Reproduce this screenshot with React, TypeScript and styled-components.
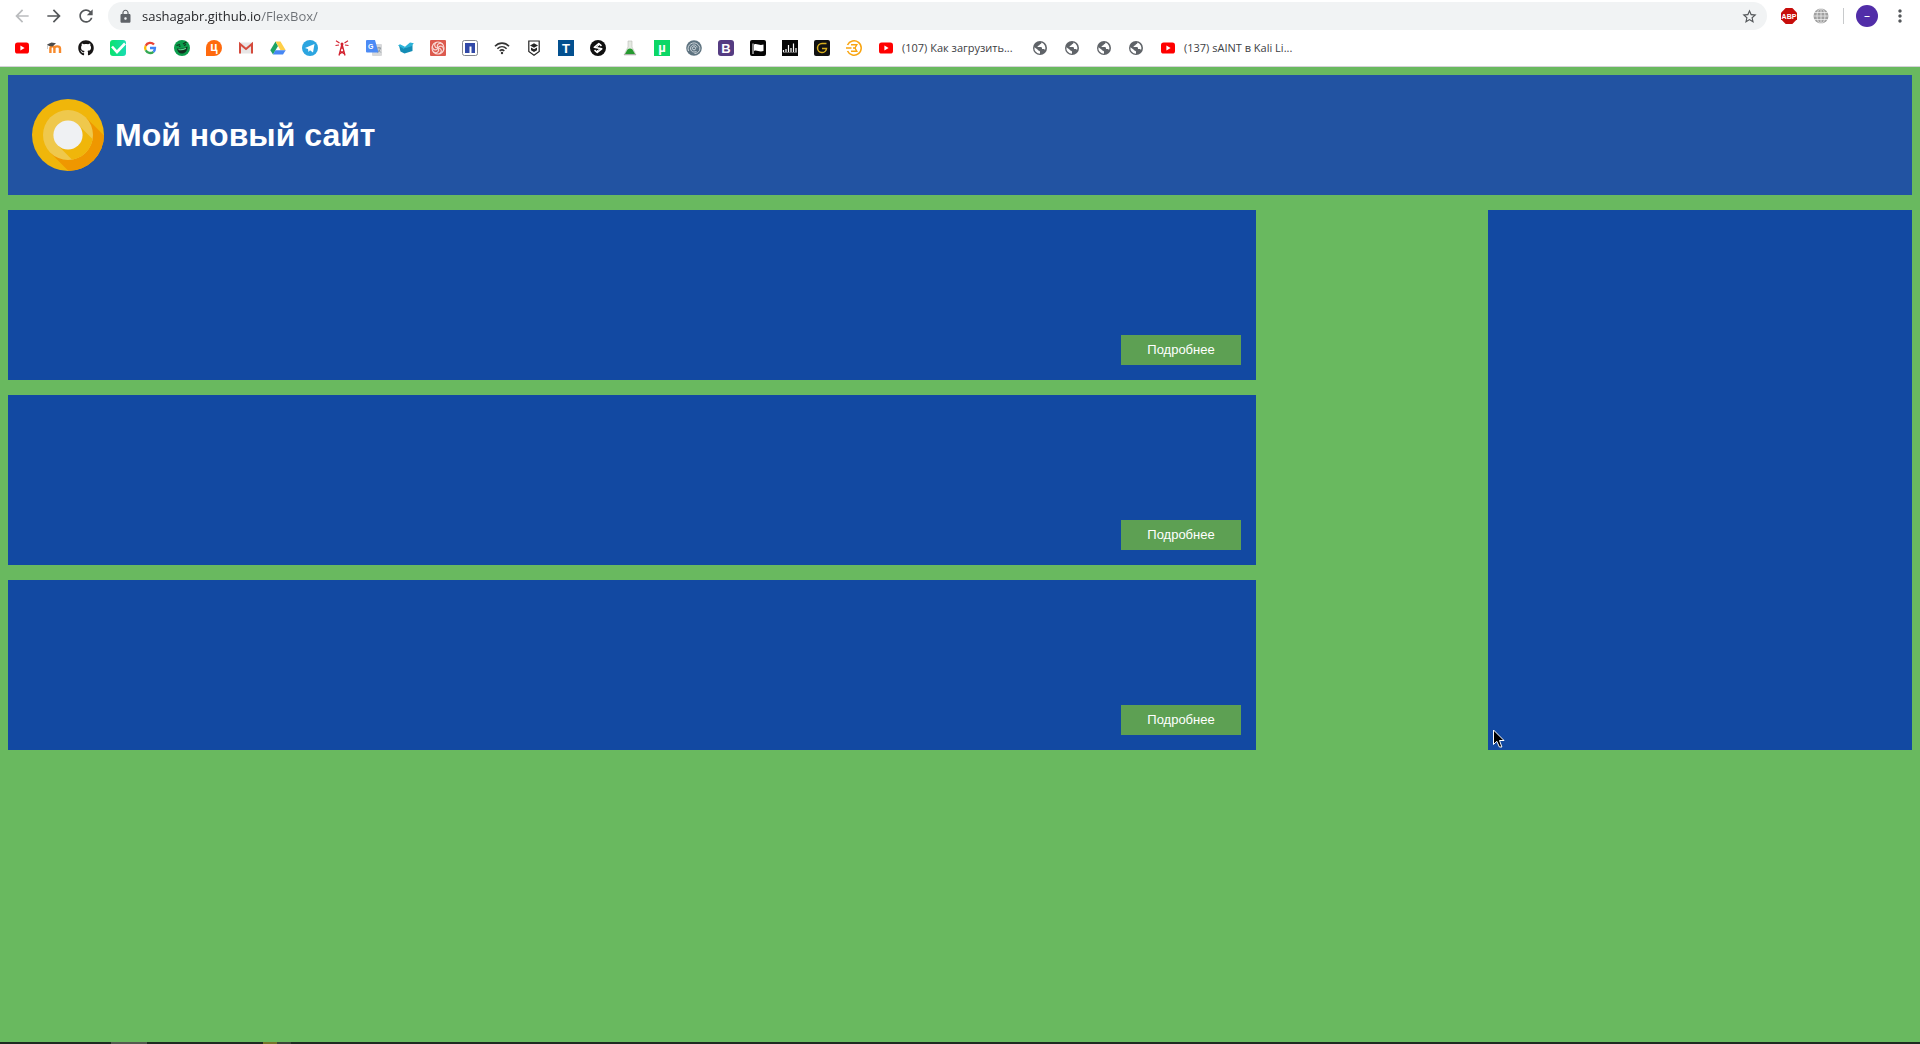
import React from "react";
import styled, { createGlobalStyle } from "styled-components";
import { FaGithub } from "react-icons/fa";
import { MdArrowBack, MdArrowForward, MdRefresh, MdLock, MdStarBorder, MdMoreVert } from "react-icons/md";

const GlobalStyle = createGlobalStyle`
  *, *::before, *::after { box-sizing: border-box; }
  body { margin: 0; background: #69b95f; font-family: "Liberation Sans", Arial, sans-serif; }
`;

const uiFont = `"Open Sans", "Noto Sans", sans-serif`;

const Window = styled.div`
  min-height: 100vh;
  display: flex;
  flex-direction: column;
`;

/* Browser chrome */

const Chrome = styled.header`
  background: #fff;
  border-bottom: 1px solid #d4d3d8;
  font-family: ${uiFont};
`;

const Toolbar = styled.div`
  height: 32px;
  display: flex;
  align-items: center;
  padding: 0 10px 0 12px;
  gap: 12px;
`;

const ToolButton = styled.button<{ $dim?: boolean }>`
  width: 20px;
  height: 20px;
  padding: 0;
  border: 0;
  background: none;
  display: flex;
  align-items: center;
  justify-content: center;
  color: ${(p) => (p.$dim ? "#babcbe" : "#54575a")};
`;

const Omnibox = styled.label`
  flex: 1;
  height: 28px;
  display: flex;
  align-items: center;
  gap: 9px;
  padding: 0 8px 0 10px;
  border-radius: 14px;
  background: #f1f3f4;
  color: #5f6368;
`;

const Address = styled.input`
  flex: 1;
  min-width: 0;
  height: 24px;
  padding: 0;
  border: 0;
  outline: 0;
  font: 13px/20px ${uiFont};
  color: #202124;
  background: linear-gradient(90deg, #202124 118px, #6b6f74 118px);
  background-clip: text;
  -webkit-background-clip: text;
  -webkit-text-fill-color: transparent;
`;

const Extensions = styled.div`
  display: flex;
  align-items: center;
  gap: 12px;
`;

const Divider = styled.span`
  width: 1px;
  height: 16px;
  background: #c8cacc;
`;

const Avatar = styled.button`
  width: 22px;
  height: 22px;
  padding: 0;
  border: 0;
  border-radius: 50%;
  background: #512da8;
  color: #fff;
  font: 12px/20px ${uiFont};
`;

const Bookmarks = styled.nav`
  height: 34px;
  display: flex;
  align-items: center;
  gap: 16px;
  padding: 0 14px 2px;
  overflow: hidden;
`;

const Bookmark = styled.a`
  flex: none;
  display: flex;
  align-items: center;
  gap: 8px;
  color: #3c4043;
  font-size: 11px;
  line-height: 16px;
  text-decoration: none;
  white-space: nowrap;
`;

const BookmarkLabel = styled.span`
  min-width: 114px;
`;

/* Page */

const Page = styled.main`
  flex: 1;
  display: flex;
  flex-direction: column;
  gap: 15px;
  padding: 8px;
`;

const Banner = styled.div`
  height: 120px;
  display: flex;
  align-items: center;
  gap: 11px;
  padding: 0 24px;
  background: #2253a2;
`;

const Title = styled.h1`
  margin: 0;
  color: #fff;
  font-size: 32px;
  line-height: 38px;
`;

const Columns = styled.div`
  display: flex;
  justify-content: space-between;
`;

const Cards = styled.section`
  width: 65vw;
  display: flex;
  flex-direction: column;
  gap: 15px;
`;

const Card = styled.article`
  height: 170px;
  display: flex;
  align-items: flex-end;
  justify-content: flex-end;
  padding: 15px;
  background: #1249a2;
`;

const MoreButton = styled.button`
  width: 120px;
  height: 30px;
  padding: 0;
  border: 0;
  background: #5da053;
  color: #fff;
  font: 13px/16px "Liberation Sans", Arial, sans-serif;
`;

const Sidebar = styled.aside`
  position: relative;
  width: calc(20vw + 40px);
  background: #1249a2;
`;

const Pointer = styled.svg`
  position: absolute;
  left: 5px;
  bottom: 2px;
`;

const Taskbar = styled.footer`
  height: 2px;
  display: flex;
  padding-left: 111px;
  background: #1d2a20;
`;

const Task = styled.span<{ $width: number; $color: string }>`
  width: ${(p) => p.$width}px;
  margin-right: ${(p) => (p.$width > 20 ? 116 : 0)}px;
  background: ${(p) => p.$color};
`;

/* Icons */

const Glyph = ({ children }: { children: React.ReactNode }) => (
  <svg width="16" height="16" viewBox="0 0 16 16" aria-hidden="true">{children}</svg>
);

type LetterProps = { text: string; fill?: string; size?: number; y?: number; weight?: number };
const Letter = ({ text, fill = "#fff", size = 12, y = 12, weight = 700 }: LetterProps) => (
  <text x="8" y={y} textAnchor="middle" fontFamily="Liberation Sans, sans-serif" fontSize={size} fontWeight={weight} fill={fill}>{text}</text>
);

const YouTube = () => (
  <Glyph>
    <rect x="1" y="2.6" width="14" height="11" rx="2.6" fill="#f00" />
    <path d="M6.4 5.6v5L10.6 8z" fill="#fff" />
  </Glyph>
);
const Moodle = () => (
  <Glyph>
    <path d="M4.4 13V8.6c0-3 4-3 4 0V13M8.4 8.6c0-3 5.600-3 5.600 0V13" fill="none" stroke="#f7892b" strokeWidth="2.400" />
    <path d="M1 4.600 5.500 2.500 10 3.200 6.500 6.600 3 6z" fill="#4b4b4b" />
    <path d="M1.500 5v4" stroke="#a9a9a9" strokeWidth=".6" />
  </Glyph>
);
const Check = () => (
  <Glyph>
    <defs><linearGradient id="chk" x2="1" y2="0"><stop stopColor="#0be36c" /><stop offset="1" stopColor="#1bdcb4" /></linearGradient></defs>
    <rect width="16" height="16" rx="3" fill="url(#chk)" />
    <path d="M2 6.500 7 12 15 3.500" fill="none" stroke="#fff" strokeWidth="2.600" />
  </Glyph>
);
const Google = () => (
  <Glyph>
    <g fill="none" strokeWidth="2.300">
      <path d="M12 4.600A5 5 0 0 0 3.700 5.700" stroke="#ea4335" />
      <path d="M3.700 5.700a5 5 0 0 0 0 4.600" stroke="#fbbc05" />
      <path d="M3.700 10.300A5 5 0 0 0 11.400 11.800" stroke="#34a853" />
      <path d="M11.400 11.800A5 5 0 0 0 13 8H8" stroke="#4285f4" />
    </g>
  </Glyph>
);
const Laugh = () => (
  <Glyph>
    <circle cx="8" cy="8" r="8" fill="#0b9d4c" />
    <path d="M3 8.500c3 .8 7 .3 10.500-2C13.500 11 11 13.500 8 13.500S3.500 11.500 3 8.500z" fill="#12301f" />
    <path d="M4.500 9.500c2.500.6 5 .2 7.500-1.200" stroke="#5fd68f" strokeWidth="1.200" fill="none" />
    <path d="M2.500 5.500 6 4.500M9 4l3.500-2M5 6.500l1.500-.5M10 5.500l2-1" stroke="#12301f" strokeWidth="1.300" />
  </Glyph>
);
const Cyan = () => (
  <Glyph>
    <path d="M8 0a8 8 0 1 1 0 16H0V8a8 8 0 0 1 8-8z" fill="#ff6a0e" />
    <Letter text="ц" size={12} y={11} />
  </Glyph>
);
const Gmail = () => (
  <Glyph>
    <rect x="1" y="2.500" width="14" height="11" rx="1" fill="#e8e6e6" />
    <path d="M2 13.500V4l6 5 6-5v9.500" fill="none" stroke="#d54b3d" strokeWidth="2" />
  </Glyph>
);
const Drive = () => (
  <Glyph>
    <path d="M5.500 1.500 8 6 3 14.500.300 10.200z" fill="#1da362" />
    <path d="M5.500 1.500h5l5.200 8.700h-5.200z" fill="#ffcf48" />
    <path d="M5.400 10.200h10.300L13 14.500H3z" fill="#4687f4" />
  </Glyph>
);
const Telegram = () => (
  <Glyph>
    <circle cx="8" cy="8" r="8" fill="#2ca5e0" />
    <path d="M3 8 12.500 4 11 12.500 8 10.300 6.500 12 6 9z" fill="#fff" />
  </Glyph>
);
const Tower = () => (
  <Glyph>
    <g stroke="#d2202e" fill="none">
      <path d="M8 4 5 15.500M8 4l3 11.500M6.500 8h3M6 11l4.500 3M10 11l-4.500 3" strokeWidth="1.300" />
      <path d="M5.500 3 2 .8M5 5 1.500 5.500M10.500 3 14 .8M11 5l3.500.5" strokeWidth="1.100" />
    </g>
    <circle cx="8" cy="4" r="1.500" fill="#d2202e" />
  </Glyph>
);
const Translate = () => (
  <Glyph>
    <rect x="6" y="4" width="10" height="12" rx="1" fill="#d7d8da" />
    <path d="M1 0h8l3.500 12.500H1a1 1 0 0 1-1-1V1a1 1 0 0 1 1-1z" fill="#4c8bf5" />
    <text x="2" y="9" fontFamily="Liberation Sans, sans-serif" fontWeight="700" fontSize="7" fill="#fff">G</text>
    <path d="M11 8h4M13 7v1M14.300 8c-.3 2-1.300 3.500-2.800 4.600M12 9.500l2.800 3" fill="none" stroke="#7d8b92" strokeWidth=".8" />
  </Glyph>
);
const Book = () => (
  <Glyph>
    <path d="M1 5.500 6.500 7.500 14.500 5v6L6.500 13.500 2.500 11.500z" fill="#138cb5" />
    <path d="M0 5.500 2 4.200 7 6.800 6 9zM7 6.800 12 2.500 15.800 3.200 13.500 6.200 8 8z" fill="#2bb2d8" />
  </Glyph>
);
const Knot = () => (
  <Glyph>
    <rect width="16" height="16" rx="1" fill="#dc5a4e" />
    <g fill="none" stroke="#f9d9d5" strokeWidth="1.100">
      {[0, 60, 120, 180, 240, 300].map((a) => <path key={a} d="M8 8C6 5 9 2 12.500 4" transform={`rotate(${a} 8 8)`} />)}
      <circle cx="8" cy="8" r="6" />
    </g>
  </Glyph>
);
const Netacad = () => (
  <Glyph>
    <rect x=".5" y=".5" width="15" height="15" rx="2" fill="#fff" stroke="#85878e" />
    <path d="M3 3h10v10H9.500V6.500h-2V13H3z" fill="#3149a8" />
  </Glyph>
);
const Wifi = () => (
  <Glyph>
    <g fill="none" stroke="#343434" strokeWidth="1.600">
      <path d="M1 6.300c4-4.200 10-4.200 14 0M3.400 8.800c2.700-2.700 6.500-2.700 9.200 0M5.700 11c1.400-1.300 3.200-1.300 4.600 0" />
    </g>
    <circle cx="8" cy="13" r="1.200" fill="#343434" />
  </Glyph>
);
const Shield = () => (
  <Glyph>
    <path d="M2.800 1h10.400v10.500L8 15.200 2.800 11.500z" fill="#fff" stroke="#242424" strokeWidth="1.200" />
    <path d="M4 5.500l4-2.200 4 2.200-4 2.200z" fill="#242424" />
    <path d="M5 7.500 8 9.200l3-1.700v2.700L8 12l-3-1.800z" fill="#242424" />
  </Glyph>
);
const Tee = () => <Glyph><rect width="16" height="16" fill="#03508f" /><Letter text="T" size={13} y={12.5} /></Glyph>;
const Stack = () => (
  <Glyph>
    <circle cx="8" cy="8" r="8" fill="#101010" />
    <path d="M11.500 5.800 8.800 3.600 4.300 7.300 11.700 8.800 7.200 12.400 4.500 10.200" fill="none" stroke="#fff" strokeWidth="1.600" strokeLinejoin="round" />
    <path d="M6.300 7.200 9.300 5M9.700 9l-3 2.200" stroke="#fff" strokeWidth="1" />
  </Glyph>
);
const Flask = () => (
  <Glyph>
    <path d="M6 1h4v6l4 8H2l4-8z" fill="#e4e9e2" stroke="#b8beb5" strokeWidth=".6" />
    <path d="M5.500 9.500q2.500-2 5 0L13 14H3z" fill="#269a30" />
    <path d="M2 14.500h12" stroke="#aeb0ad" />
  </Glyph>
);
const Torrent = () => <Glyph><rect width="16" height="16" fill="#0bd766" /><Letter text="µ" size={13} y={12} /></Glyph>;
const Swirl = () => (
  <Glyph>
    <circle cx="8" cy="8" r="7.800" fill="#5e7380" />
    <g fill="none" stroke="#d9e0e4" strokeWidth=".9">
      <path d="M2.500 11C0 4.500 8 .5 12 4.500s1 9-3.500 9" />
      <path d="M10.500 11.500C6 13.500 3.500 9.500 5 6.800s5.500-2.300 6 .700" />
      <circle cx="8" cy="8.300" r="1.600" />
    </g>
  </Glyph>
);
const Bootstrap = () => <Glyph><rect width="16" height="16" rx="3" fill="#553c82" /><Letter text="B" size={13} y={12.5} /></Glyph>;
const Flag = () => (
  <Glyph>
    <rect width="16" height="16" rx="2" fill="#050505" />
    <path d="M3 3.500V14" stroke="#fff" />
    <path d="M4 4.500c3-1.500 5 1.500 9.500 0V11C9 12.500 7 9.500 4 11z" fill="#fff" />
  </Glyph>
);
const Bars = () => (
  <Glyph>
    <rect width="16" height="16" fill="#070707" />
    <path d="M1.500 12v-2M4 12V9M6.500 12V5M9 12V8M11.500 12V3.500M14 12V8" stroke="#fff" strokeWidth="1.200" />
    <path d="M1 12.500h14" stroke="#777" strokeWidth=".8" />
  </Glyph>
);
const GoldG = () => (
  <Glyph>
    <rect width="16" height="16" rx="2" fill="#111" />
    <path d="M12.500 3.500H8a4.500 4.500 0 1 0 4.500 5H8" fill="none" stroke="#d7ae1d" strokeWidth="1.500" />
  </Glyph>
);
const Coin = () => (
  <Glyph>
    <path d="M1.500 5A7.200 7.200 0 1 1 1.500 11" fill="none" stroke="#f9a511" strokeWidth="1.500" />
    <path d="M0 8h5.500M5 4.800h5.800L9 8l1.800 3.200H5M7 8h3" fill="none" stroke="#f9a511" strokeWidth="1.400" />
  </Glyph>
);
const Globe = () => (
  <Glyph>
    <circle cx="8" cy="8" r="7" fill="#5f6368" />
    <path d="M9.500 2.600C9.500 4.500 8 4 7.500 5 7 6 5.500 5.500 5.500 7H9c1 0 1 1 1 2h1.500c.8 0 1.200.600 1.500 1.200A5.700 5.700 0 0 0 9.500 2.600zM2.400 7.200 5.500 9.500c.500 1.500 2.500 1 2.500 2.200v2A5.700 5.700 0 0 1 2.400 7.200z" fill="#fff" />
  </Glyph>
);
const AdBlock = () => (
  <Glyph>
    <path d="M4.700 0h6.600L16 4.700v6.600L11.300 16H4.700L0 11.300V4.700z" fill="#c70d0b" />
    <Letter text="ABP" size={7} y={10.5} />
  </Glyph>
);
const GridGlobe = () => (
  <Glyph>
    <circle cx="8" cy="8" r="7.500" fill="#a0a0a0" />
    <path d="M8 0v16M0 8h16M1 4.500h14M1 11.500h14" stroke="#eee" strokeWidth=".8" />
    <ellipse cx="8" cy="8" rx="4" ry="7.500" fill="none" stroke="#eee" strokeWidth=".8" />
  </Glyph>
);

const Logo = () => (
  <svg width="72" height="72" viewBox="0 0 72 72" aria-hidden="true">
    <defs>
      <clipPath id="disc"><circle cx="36" cy="36" r="36" /></clipPath>
      <clipPath id="ring"><circle cx="36" cy="36" r="25" /></clipPath>
    </defs>
    <circle cx="36" cy="36" r="36" fill="#f0b60a" />
    <path d="M53.700 18.300 90 54.600 54.600 90 18.300 53.700z" fill="#ef9700" clipPath="url(#disc)" />
    <circle cx="36" cy="36" r="25" fill="#efc84c" />
    <path d="M46.300 25.700 82 61.400 61.400 82 25.700 46.300z" fill="#f0b60a" clipPath="url(#ring)" />
    <circle cx="36" cy="36" r="14.600" fill="#eff1f3" />
  </svg>
);

type Entry = { name: string; Icon: React.ComponentType; label?: string };

const bookmarks: Entry[] = [
  { name: "YouTube", Icon: YouTube },
  { name: "Moodle", Icon: Moodle },
  { name: "GitHub", Icon: () => <FaGithub size={16} color="#171515" /> },
  { name: "Check", Icon: Check },
  { name: "Google", Icon: Google },
  { name: "Laugh", Icon: Laugh },
  { name: "Citilink", Icon: Cyan },
  { name: "Gmail", Icon: Gmail },
  { name: "Drive", Icon: Drive },
  { name: "Telegram", Icon: Telegram },
  { name: "Tower", Icon: Tower },
  { name: "Translate", Icon: Translate },
  { name: "Book", Icon: Book },
  { name: "Knot", Icon: Knot },
  { name: "Netacad", Icon: Netacad },
  { name: "Wi-Fi", Icon: Wifi },
  { name: "Shield", Icon: Shield },
  { name: "T", Icon: Tee },
  { name: "Stack", Icon: Stack },
  { name: "Flask", Icon: Flask },
  { name: "Torrent", Icon: Torrent },
  { name: "Swirl", Icon: Swirl },
  { name: "Bootstrap", Icon: Bootstrap },
  { name: "Flag", Icon: Flag },
  { name: "Bars", Icon: Bars },
  { name: "G", Icon: GoldG },
  { name: "Coin", Icon: Coin },
  { name: "Video 107", Icon: YouTube, label: "(107) Как загрузить..." },
  { name: "Site 1", Icon: Globe },
  { name: "Site 2", Icon: Globe },
  { name: "Site 3", Icon: Globe },
  { name: "Site 4", Icon: Globe },
  { name: "Video 137", Icon: YouTube, label: "(137) sAINT в Kali Li..." },
];

export default function App() {
  return (
    <Window>
      <GlobalStyle />
      <Chrome>
        <Toolbar>
          <ToolButton $dim aria-label="Назад"><MdArrowBack size={20} /></ToolButton>
          <ToolButton aria-label="Вперёд"><MdArrowForward size={20} /></ToolButton>
          <ToolButton aria-label="Обновить"><MdRefresh size={20} /></ToolButton>
          <Omnibox>
            <MdLock size={15} />
            <Address type="text" aria-label="Адрес" defaultValue="sashagabr.github.io/FlexBox/" />
            <ToolButton aria-label="Добавить в закладки"><MdStarBorder size={17} /></ToolButton>
          </Omnibox>
          <Extensions>
            <ToolButton aria-label="Adblock Plus"><AdBlock /></ToolButton>
            <ToolButton aria-label="Сеть"><GridGlobe /></ToolButton>
            <Divider />
            <Avatar aria-label="Профиль">–</Avatar>
            <ToolButton aria-label="Меню"><MdMoreVert size={20} /></ToolButton>
          </Extensions>
        </Toolbar>
        <Bookmarks>
          {bookmarks.map(({ name, Icon, label }) => (
            <Bookmark key={name} href="#" aria-label={label ?? name}>
              <Icon />
              {label && <BookmarkLabel>{label}</BookmarkLabel>}
            </Bookmark>
          ))}
        </Bookmarks>
      </Chrome>
      <Page>
        <Banner>
          <Logo />
          <Title>Мой новый сайт</Title>
        </Banner>
        <Columns>
          <Cards>
            {[1, 2, 3].map((n) => (
              <Card key={n}><MoreButton>Подробнее</MoreButton></Card>
            ))}
          </Cards>
          <Sidebar>
            <Pointer width="12" height="19" viewBox="0 0 12 19" aria-hidden="true">
              <path d="M.5 1v14.500l3.300-3.200 2.600 5.700h2.500l-2.400-6.500h4.500z" fill="#000" stroke="#fff" />
            </Pointer>
          </Sidebar>
        </Columns>
      </Page>
      <Taskbar>
        <Task $width={36} $color="#545a50" />
        <Task $width={14} $color="#77752a" />
        <Task $width={14} $color="#3b4539" />
      </Taskbar>
    </Window>
  );
}
